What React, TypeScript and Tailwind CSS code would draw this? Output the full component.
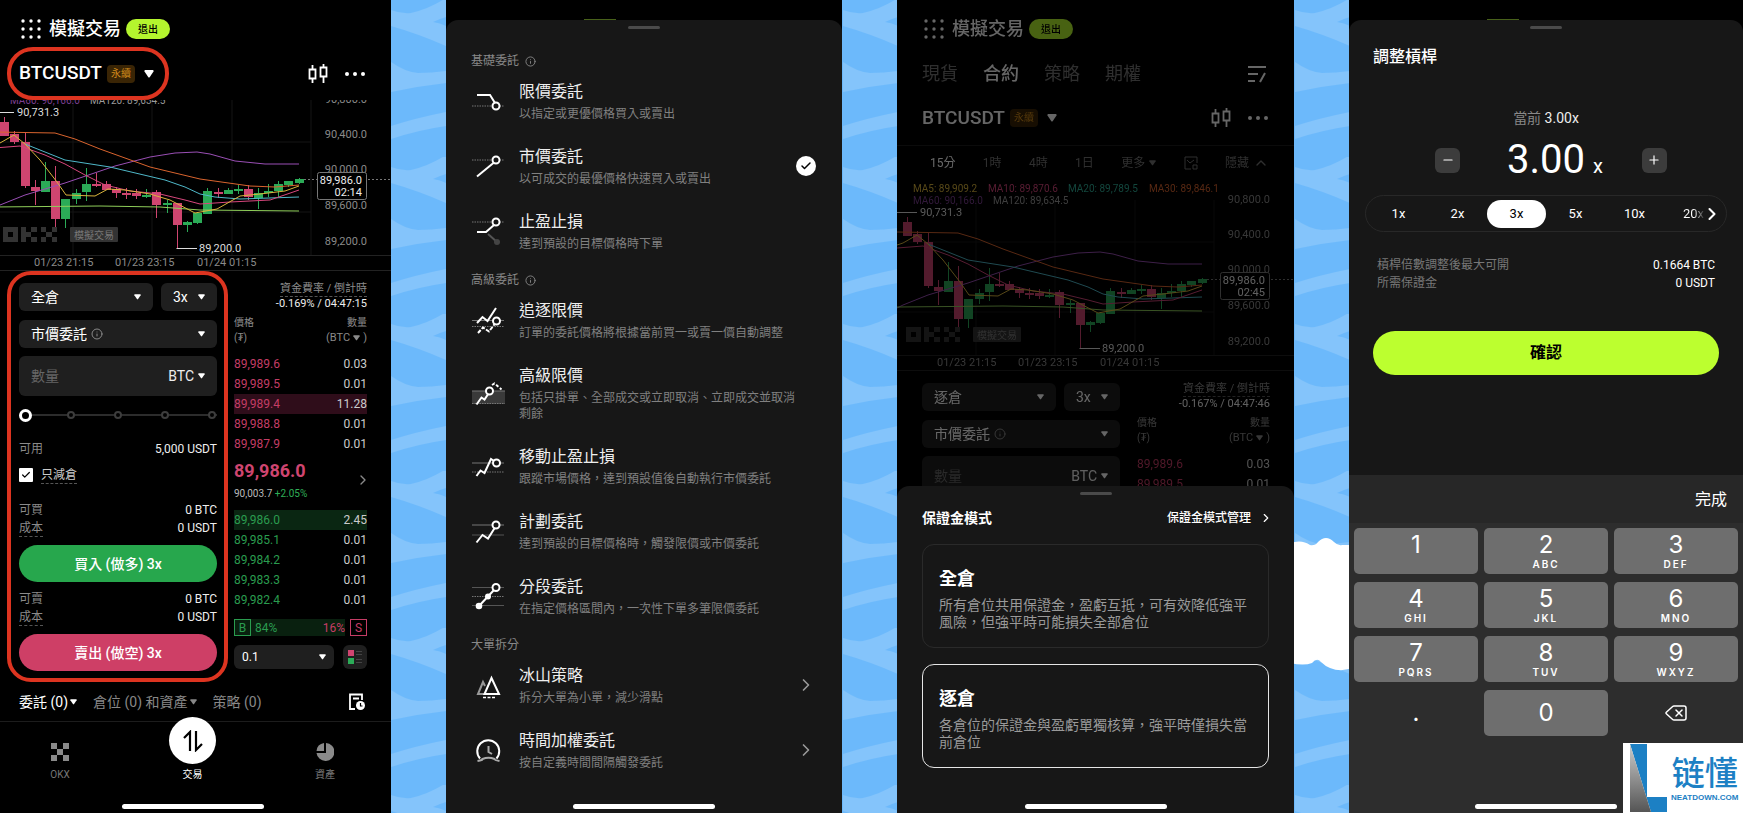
import type { ReactNode } from "react"
import { Check, ChevronRight, ChevronUp, Delete, Info, Minus, Plus } from "lucide-react"

type Row = [string, string, boolean?]

const ASKS: Row[] = [
  ["89,989.6", "0.03"],
  ["89,989.5", "0.01"],
  ["89,989.4", "11.28", true],
  ["89,988.8", "0.01"],
  ["89,987.9", "0.01"],
]

const BIDS: Row[] = [
  ["89,986.0", "2.45", true],
  ["89,985.1", "0.01"],
  ["89,984.2", "0.01"],
  ["89,983.3", "0.01"],
  ["89,982.4", "0.01"],
]

// x, body top, body bottom, wick top, wick bottom, rising
const CANDLES: [number, number, number, number, number, boolean][] = [
  [4, 122, 136, 117, 136, false],
  [14, 134, 142, 131, 144, false],
  [25, 142, 186, 133, 188, false],
  [35, 187, 191, 180, 205, false],
  [45, 181, 192, 162, 192, true],
  [55, 181, 219, 166, 227, false],
  [65, 199, 219, 199, 228, true],
  [76, 193, 199, 189, 204, true],
  [86, 184, 192, 168, 201, true],
  [96, 184, 186, 173, 187, false],
  [106, 184, 190, 181, 190, false],
  [116, 189, 193, 187, 198, false],
  [126, 193, 195, 188, 199, false],
  [136, 193, 196, 189, 199, false],
  [146, 195, 197, 189, 198, true],
  [156, 192, 205, 190, 218, false],
  [167, 203, 205, 200, 213, true],
  [177, 203, 225, 203, 248, false],
  [187, 222, 225, 221, 232, true],
  [197, 213, 223, 212, 224, true],
  [207, 191, 214, 188, 214, true],
  [218, 192, 194, 188, 198, false],
  [228, 190, 194, 188, 194, true],
  [238, 189, 191, 185, 194, true],
  [248, 189, 197, 185, 200, false],
  [258, 193, 198, 188, 209, true],
  [268, 191, 193, 184, 197, true],
  [278, 184, 191, 181, 197, true],
  [288, 181, 185, 181, 187, true],
  [299, 179, 183, 178, 184, true],
]

const AVERAGES: [string, string][] = [
  ["#9a4fb5", "-6,208 0,205 25,195 65,183 115,166 150,157 175,153 197,152 210,154 235,161 265,164 299,164"],
  ["#8fce5a", "-6,207 100,206 160,207 200,210 299,211"],
  ["#d9642e", "-6,132 55,133 75,139 100,149 125,158 150,167 200,179 250,186 275,187 299,185"],
  ["#4fb8c9", "25,144 45,152 65,160 110,167 165,180 185,187 200,194 215,197 240,199 299,197"],
  ["#d8477d", "-6,148 20,146 45,155 65,164 85,175 105,185 130,191 160,194 185,200 200,204 230,202 270,200 299,190"],
  ["#d9b43c", "-6,145 0,143 14,135 25,144 40,160 57,182 66,195 95,196 108,189 125,190 150,194 170,200 195,213 217,209 240,196 260,194 285,191 299,186"],
]

const ICONS: Record<string, ReactNode> = {
  limit: (
    <>
      <path d="M1 22h32" stroke="#777" strokeWidth="1" strokeDasharray="1.5 1" />
      <path d="M6 11h13l5 8" />
      <circle cx="25" cy="22" r="3.5" fill="#171717" />
    </>
  ),
  market: (
    <>
      <path d="M1 11h32" stroke="#777" strokeWidth="1" strokeDasharray="1.5 1" />
      <path d="M6 27.500l17-14" />
      <circle cx="25" cy="11" r="3.500" fill="#171717" />
    </>
  ),
  stop: (
    <>
      <path d="M1 8h32" stroke="#777" strokeWidth="1" strokeDasharray="1.5 1" />
      <path d="M17 20l9 8" stroke="#555" />
      <circle cx="26" cy="28" r="3" fill="#444" stroke="none" />
      <path d="M6 18h9l8-7" />
      <circle cx="25" cy="8" r="3.5" fill="#171717" />
    </>
  ),
  chase: (
    <>
      <path d="M1 17.500h32" stroke="#777" strokeWidth="1" />
      <path d="M1 23.500h32" stroke="#777" strokeWidth="1" strokeDasharray="1.5 1" />
      <path d="M6 20l5.500-6 5 4 8.500-13" />
      <path d="M7 30l5-5.500 6 4 6-8" strokeDasharray="4 1.500" />
      <circle cx="25.5" cy="18" r="3.5" fill="#171717" />
    </>
  ),
  advanced: (
    <>
      <rect x="1" y="15" width="33" height="13" fill="#3a3a3a" stroke="none" />
      <path d="M1 15h33" stroke="#777" strokeWidth="1" />
      <path d="M1 27.5h33" stroke="#777" strokeWidth="1" strokeDasharray="1.5 1" />
      <path d="M5.5 28.500l5-7 3 2 4-6" />
      <path d="M21 9l2.500-1.500 7 6" strokeDasharray="3 2" />
      <circle cx="18.5" cy="15" r="3.5" fill="#171717" />
    </>
  ),
  trailing: (
    <>
      <path d="M1 14h32" stroke="#777" strokeWidth="1" />
      <path d="M1 23h32" stroke="#777" strokeWidth="1" strokeDasharray="1.5 1" />
      <path d="M5.500 27l4-5.500 4 2.500 6.500-14 3 2" />
      <circle cx="25.5" cy="14" r="3.5" fill="#171717" />
    </>
  ),
  trigger: (
    <>
      <path d="M1 11h32" stroke="#777" strokeWidth="1" />
      <path d="M1 21h32" stroke="#555" strokeWidth="1" />
      <path d="M5.500 28.500l6-7.500 5.500 3.500 7-11" />
      <circle cx="25" cy="11" r="3.5" fill="#171717" />
    </>
  ),
  scaled: (
    <>
      <path d="M1 8.500h32M1 26.500h32" stroke="#555" strokeWidth="1" />
      <path d="M1 17.5h32" stroke="#777" strokeWidth="1" strokeDasharray="1.5 1" />
      <path d="M8 27L23 11" />
      <circle cx="8" cy="27" r="3.300" fill="#fff" stroke="none" />
      <circle cx="17" cy="17.500" r="3" fill="#fff" stroke="none" />
      <circle cx="25" cy="8.500" r="3.5" fill="#171717" />
    </>
  ),
  iceberg: (
    <>
      <path d="M13 26H7l5-12 2 4" stroke="#999" />
      <path d="M20.500 10l7.500 16H13.500z" />
      <path d="M12 29.500h12" strokeDasharray="3 1.500" strokeWidth="1.500" />
    </>
  ),
  twap: (
    <>
      <path d="M9 25.500a11 11 0 1 1 16.500 0" />
      <path d="M6.500 28q5.500-1 5-2 6-2.500 12 0 0 1 5 2" stroke="#aaa" />
      <path d="M17.500 13v6l3.500 2" stroke="#aaa" />
    </>
  ),
}

const ORDER_TYPES = [
  {
    group: "基礎委託",
    info: true,
    items: [
      { icon: "limit", title: "限價委託", text: "以指定或更優價格買入或賣出" },
      { icon: "market", title: "市價委託", text: "以可成交的最優價格快速買入或賣出", selected: true },
      { icon: "stop", title: "止盈止損", text: "達到預設的目標價格時下單" },
    ],
  },
  {
    group: "高級委託",
    info: true,
    items: [
      { icon: "chase", title: "追逐限價", text: "訂單的委託價格將根據當前買一或賣一價自動調整" },
      { icon: "advanced", title: "高級限價", text: "包括只掛單、全部成交或立即取消、立即成交並取消剩餘" },
      { icon: "trailing", title: "移動止盈止損", text: "跟蹤市場價格，達到預設值後自動執行市價委託" },
      { icon: "trigger", title: "計劃委託", text: "達到預設的目標價格時，觸發限價或市價委託" },
      { icon: "scaled", title: "分段委託", text: "在指定價格區間內，一次性下單多筆限價委託" },
    ],
  },
  {
    group: "大單拆分",
    items: [
      { icon: "iceberg", title: "冰山策略", text: "拆分大單為小單，減少滑點", more: true },
      { icon: "twap", title: "時間加權委託", text: "按自定義時間間隔觸發委託", more: true },
    ],
  },
] as {
  group: string
  info?: boolean
  items: { icon: string; title: string; text: string; selected?: boolean; more?: boolean }[]
}[]

const KEYS = [
  ["1", ""],
  ["2", "ABC"],
  ["3", "DEF"],
  ["4", "GHI"],
  ["5", "JKL"],
  ["6", "MNO"],
  ["7", "PQRS"],
  ["8", "TUV"],
  ["9", "WXYZ"],
]

const Caret = ({ big }: { big?: boolean }) => (
  <svg viewBox="0 0 10 8" className={`pointer-events-none shrink-0 ${big ? "h-2 w-[10px]" : "h-[6px] w-[7px]"}`} fill="currentColor" aria-hidden="true">
    <path d="M1 0h8q1 .5.500 1.500L5.800 7q-.8 1-1.600 0L.5 1.500Q0 .5 1 0z" />
  </svg>
)

const HomeBar = () => (
  <div className="mt-auto flex justify-center pb-1">
    <div className="h-[5px] w-[142px] rounded-full bg-white" />
  </div>
)

const Handle = () => <div className="mx-auto mt-[6px] h-[3px] w-8 rounded-full bg-[#4a4a4a]" />

const Dropdown = ({ label, value, className, info }: { label: string; value: string; className: string; info?: boolean }) => (
  <div className={`flex items-center rounded-md bg-[#1f1f1f] ${className}`}>
    <select aria-label={label} className="field-sizing-content appearance-none bg-transparent text-white outline-none">
      <option>{value}</option>
    </select>
    {info && <Info className="ml-1 size-3 text-[#8a8a8a]" />}
    <span className="ml-auto">
      <Caret />
    </span>
  </div>
)

const Chart = ({ wide, countdown }: { wide?: boolean; countdown: string }) => (
  <svg
    viewBox={wide ? "-6 79 397 192" : "0 100 391 171"}
    className="block h-auto w-full"
    fontSize="11"
    role="img"
    aria-label="BTCUSDT"
  >
    <path d="M73 100V255M152 100V255M232 100V255M311 100V255M-6 142H311M-6 212H311" stroke="#151515" />
    <g fontSize="10">
      {wide && (
        <>
          <text x="10" y="92" fill="#d9b43c">MA5: 89,909.2</text>
          <text x="85" y="92" fill="#d8477d">MA10: 89,870.6</text>
          <text x="165" y="92" fill="#2fae97">MA20: 89,789.5</text>
          <text x="246" y="92" fill="#d9642e">MA30: 89,846.1</text>
        </>
      )}
      <text x="10" y="104" fill="#7b3f91">MA60: 90,166.0</text>
      <text x="90" y="104" fill="#9a9a9a">MA120: 89,634.5</text>
    </g>
    <g fill="#8a8a8a" textAnchor="end">
      <text x="367" y="103">90,800.0</text>
      <text x="367" y="138">90,400.0</text>
      <text x="367" y="173">90,000.0</text>
      <text x="367" y="209">89,600.0</text>
      <text x="367" y="245">89,200.0</text>
    </g>
    <g fill="#333">
      <path fillRule="evenodd" d="M3 227h15v15H3zM8 232h5v5H8z" />
      <path d="M21 227h5v15h-5zM26 232h5v5h-5zM31 227h6v5h-6zM31 237h6v5h-6z" />
      <path d="M41 227h5v5h-5zM52 227h5v5h-5zM46 232h6v5h-6zM41 237h5v5h-5zM52 237h5v5h-5z" />
      <rect x="70" y="227" width="48" height="15" rx="1" />
    </g>
    <text x="94" y="239" textAnchor="middle" fill="#777" fontSize="10">模擬交易</text>
    {CANDLES.map(([x, top, bottom, high, low, up]) => (
      <g key={x} fill={up ? "#2bab57" : "#cf4570"}>
        <rect x={x} y={high} width="1" height={low - high} />
        <rect x={x - 4} y={top} width="9" height={bottom - top} />
      </g>
    ))}
    {AVERAGES.map(([color, points]) => (
      <polyline key={color} points={points} fill="none" stroke={color} strokeWidth="1" strokeLinejoin="round" />
    ))}
    <path d="M-6 112.500H14M176.500 248.500H197" stroke="#ddd" />
    <text x="17" y="116" fill="#ddd">90,731.3</text>
    <text x="199" y="252" fill="#ddd">89,200.0</text>
    <path d="M304 179.5H391" stroke="#777" strokeDasharray="2 2" />
    <rect x="317.500" y="172.500" width="49" height="27" rx="2" fill="#000" stroke="#777" />
    <g fill="#eee" textAnchor="end">
      <text x="362" y="184">89,986.0</text>
      <text x="362" y="196">{countdown}</text>
    </g>
    <path d="M-6 255.500H391M-6 270.500H391" stroke="#222" />
    <g fill="#8a8a8a">
      <text x="34" y="266">01/23 21:15</text>
      <text x="115" y="266">01/23 23:15</text>
      <text x="197" y="266">01/24 01:15</text>
    </g>
  </svg>
)

const Book = ({ rows, side }: { rows: Row[]; side: "ask" | "bid" }) => (
  <table className="w-full border-collapse text-xs">
    <tbody>
      {rows.map(([price, size, hit]) => (
        <tr key={price} className={`h-5 ${hit ? (side === "ask" ? "bg-[#2f0d1a]" : "bg-[#0a2612]") : ""}`}>
          <td className={side === "ask" ? "text-[#c53d66]" : "text-[#2a9c4f]"}>{price}</td>
          <td className="text-right text-[#ccc]">{size}</td>
        </tr>
      ))}
    </tbody>
  </table>
)

const Pair = ({ label, value, dashed }: { label: string; value: string; dashed?: boolean }) => (
  <div className="flex h-[18px] items-center justify-between text-xs">
    <span className={`leading-4 text-[#8a8a8a] ${dashed ? "border-b border-dashed border-[#555]" : ""}`}>{label}</span>
    <span className="text-[#eee]">{value}</span>
  </div>
)

const OrderForm = ({ mode, short }: { mode: string; short?: boolean }) => (
  <form className={`rounded-3xl border-4 pt-2 pr-[7px] pb-[7px] pl-2 ${short ? "border-transparent" : "border-[#dd3420]"}`}>
    <div className="flex gap-2 text-sm">
      <Dropdown label="保證金模式" value={mode} className="h-7 flex-1 px-3" />
      <Dropdown label="槓桿" value="3x" className="h-7 w-14 px-3" />
    </div>
    <Dropdown label="委託類型" value="市價委託" className="mt-[9px] h-7 px-3 text-sm" info />
    <div className="mt-2 flex h-10 items-center rounded-md bg-[#1f1f1f] px-3 text-sm">
      <input aria-label="數量" placeholder="數量" className="w-24 min-w-0 flex-1 bg-transparent outline-none placeholder:text-[#666]" />
      <select aria-label="單位" className="mr-1 field-sizing-content appearance-none bg-transparent text-[#eee] outline-none">
        <option>BTC</option>
      </select>
      <Caret />
    </div>
    {!short && (
      <>
        <div className="relative mt-[11px] h-4">
          <div className="absolute inset-x-0 top-[7px] flex h-[2px] items-center justify-between bg-[#2c2c2c] px-px">
            {[0, 1, 2, 3, 4].map((n) => (
              <span key={n} className="size-2 rounded-full border-2 border-[#3d3d3d] bg-black" />
            ))}
          </div>
          <input
            type="range"
            aria-label="倉位比例"
            defaultValue={0}
            className="absolute inset-0 m-0 h-4 w-full appearance-none bg-transparent [&::-webkit-slider-thumb]:size-[13px] [&::-webkit-slider-thumb]:appearance-none [&::-webkit-slider-thumb]:rounded-full [&::-webkit-slider-thumb]:border-[3px] [&::-webkit-slider-thumb]:border-white [&::-webkit-slider-thumb]:bg-black"
          />
        </div>
        <div className="mt-[17px]">
          <Pair label="可用" value="5,000 USDT" />
        </div>
        <label className="relative mt-2 flex h-[18px] items-center gap-2 text-xs text-[#ccc]">
          <input type="checkbox" defaultChecked className="size-[14px] appearance-none rounded-[1px] bg-white" />
          <Check className="pointer-events-none absolute left-[2px] size-[10px] text-black" strokeWidth={3} />
          <span className="border-b border-dashed border-[#555] leading-4">只減倉</span>
        </label>
        <div className="mt-[17px]">
          <Pair label="可買" value="0 BTC" />
          <Pair label="成本" value="0 USDT" dashed />
        </div>
        <button type="button" className="mt-2 block h-[37px] w-full rounded-full bg-[#27a74d] text-sm font-medium">
          買入 (做多) 3x
        </button>
        <div className="mt-2">
          <Pair label="可賣" value="0 BTC" />
          <Pair label="成本" value="0 USDT" dashed />
        </div>
        <button type="button" className="mt-2 block h-[37px] w-full rounded-full bg-[#ce3f66] text-sm font-medium">
          賣出 (做空) 3x
        </button>
      </>
    )}
  </form>
)

const OrderBook = ({ funding, short }: { funding: string; short?: boolean }) => (
  <div className="pt-[11px] text-[#8a8a8a]">
    <div className="flex flex-col items-end text-[11px] leading-[14px]">
      <span className="border-b border-dashed border-[#555]">資金費率 / 倒計時</span>
      <span className="whitespace-nowrap text-[#eee]">{funding}</span>
    </div>
    <div className="mt-1 flex justify-between text-[10px] leading-[15px]">
      <div>
        價格
        <br />
        (₮)
      </div>
      <div className="text-right">
        數量
        <div className="flex items-center gap-[3px] text-[11px]">
          (BTC <Caret /> )
        </div>
      </div>
    </div>
    <div className="mt-[9px]">
      <Book rows={short ? ASKS.slice(0, 2) : ASKS} side="ask" />
    </div>
    {!short && (
      <>
        <div className="mt-[5px] flex items-center justify-between">
          <div>
            <div className="text-lg leading-6 font-bold text-[#cf4570]">89,986.0</div>
            <div className="mt-1 text-[10px] leading-[14px] text-[#bbb]">
              90,003.7 <span className="text-[#2fae57]">+2.05%</span>
            </div>
          </div>
          <ChevronRight className="-mr-1 size-4" />
        </div>
        <div className="mt-[9px]">
          <Book rows={BIDS} side="bid" />
        </div>
        <div className="mt-[9px] flex h-[17px] items-center justify-between text-xs">
          <div className="flex h-full w-[111px] items-center justify-between bg-[#09200f]">
            <span className="flex items-center gap-1 text-[#2a9c4f]">
              <span className="flex size-[17px] items-center justify-center border border-[#2a9c4f]">B</span>84%
            </span>
            <span className="text-[#c53d66]">16%</span>
          </div>
          <span className="flex size-[17px] items-center justify-center border border-[#c53d66] text-[#c53d66]">S</span>
        </div>
        <div className="mt-[9px] flex items-center justify-between text-xs text-white">
          <Dropdown label="深度" value="0.1" className="h-6 w-[100px] px-2" />
          <button type="button" aria-label="訂單簿樣式" className="flex size-6 items-center justify-center rounded-md bg-[#1f1f1f]">
            <svg viewBox="0 0 16 16" className="size-4">
              <path d="M1 1h6v6H1z" fill="#cf4570" />
              <path d="M1 9h6v6H1z" fill="#2bab57" />
              <path d="M9 2h6v1H9zM9 5h6v1H9zM9 10h6v1H9zM9 13h6v1H9z" fill="#444" />
            </svg>
          </button>
        </div>
      </>
    )}
  </div>
)

const TradeScreen = ({ full, mode, funding, countdown }: { full?: boolean; mode: string; funding: string; countdown: string }) => {
  const pad = full ? "pl-[25px] pr-[25px]" : "pl-[19px] pr-[25px]"
  const outdent = full ? "pl-[13px] pr-6" : "pl-[7px] pr-6"
  return (
    <div className={`flex flex-col ${full ? "" : "min-h-screen"}`}>
      <header className={`flex h-[41px] items-center pt-[17px] ${pad}`}>
        <button type="button" aria-label="選單" className="ml-[2px]">
          <svg viewBox="0 0 20 20" className="size-5" fill="currentColor">
            {[2, 10, 18].map((y) => [2, 10, 18].map((x) => <circle key={`${x}-${y}`} cx={x} cy={y} r="1.700" />))}
          </svg>
        </button>
        <h1 className="ml-2 text-lg font-medium">模擬交易</h1>
        <button type="button" className="ml-[5px] h-5 w-11 rounded-full bg-[#b4f52e] text-[10px] font-medium text-black">
          退出
        </button>
      </header>

      {full && (
        <nav className={`mt-[6px] flex h-[53px] items-center gap-[25px] text-lg text-[#777] ${pad}`}>
          <a href="#spot">現貨</a>
          <a href="#futures" className="font-medium text-white">合約</a>
          <a href="#strategy">策略</a>
          <a href="#options">期權</a>
          <svg viewBox="0 0 20 18" className="mr-[2px] ml-auto h-[18px] w-5" fill="none" stroke="#fff" strokeWidth="2">
            <path d="M1 2h18M1 9h10M1 16h7M13 17l5-9" />
          </svg>
        </nav>
      )}

      <div className={`flex items-center ${full ? "h-9" : "mt-[6px]"} ${outdent}`}>
        <button
          type="button"
          className={`flex items-center rounded-[26px] border-4 pr-[11px] pl-2 ${full ? "h-9 border-transparent" : "h-[53px] border-[#dd3420]"}`}
        >
          <span className="text-[19px] font-medium">BTCUSDT</span>
          <span className="mr-[9px] ml-[5px] rounded-sm bg-[#3a2505] px-1 text-[10px] leading-[18px] text-[#d08a1c]">永續</span>
          <Caret big />
        </button>
        <svg viewBox="0 0 20 20" className="ml-auto size-5" fill="none" stroke="#fff" strokeWidth="1.800">
          <path d="M4.500 1v4M4.500 15v4M15.500 0v3M15.500 13v6M1.500 5.500h6v9h-6zM12.500 3.500h6v9h-6z" />
        </svg>
        <button type="button" aria-label="更多" className="mr-px ml-4">
          <svg viewBox="0 0 22 6" className="h-[6px] w-[22px]" fill="currentColor">
            <circle cx="3" cy="3" r="2" />
            <circle cx="11" cy="3" r="2" />
            <circle cx="19" cy="3" r="2" />
          </svg>
        </button>
      </div>

      {full && (
        <div className="mt-[9px] flex h-[34px] items-center justify-between border-t border-[#1c1c1c] pr-[25px] pl-[33px] text-xs text-[#777]">
          <button type="button" className="text-white">15分</button>
          <button type="button">1時</button>
          <button type="button">4時</button>
          <button type="button">1日</button>
          <button type="button" className="flex items-center gap-1">更多 <Caret /></button>
          <svg viewBox="0 0 14 14" className="size-[14px]" fill="none" stroke="currentColor">
            <path d="M13 7V1H1v12h6M3 4l3 3 4-3M9 9h4v4H9z" />
          </svg>
          <button type="button" className="flex items-center gap-1">隱藏 <ChevronUp className="size-4" /></button>
        </div>
      )}

      <div className="overflow-hidden">
        <Chart wide={full} countdown={countdown} />
      </div>

      <div className={`grid grid-cols-[221fr_133fr] gap-x-[6px] ${outdent}`}>
        <OrderForm mode={mode} short={full} />
        <OrderBook funding={funding} short={full} />
      </div>

      {!full && (
        <>
          <div className={`mt-2 flex h-6 items-center gap-4 text-sm text-[#888] ${pad}`}>
            <button type="button" className="flex items-center gap-[2px] text-white">委託 (0)<Caret /></button>
            <button type="button" className="flex items-center gap-[2px]">倉位 (0) 和資產<Caret /></button>
            <button type="button">策略 (0)</button>
            <svg viewBox="0 0 18 18" className="ml-auto size-[18px]" fill="none" stroke="#fff" strokeWidth="1.800">
              <path d="M7 16H2V1.500h12V7M5 5.500h6" />
              <circle cx="12.500" cy="12.500" r="4.500" fill="#fff" stroke="none" />
              <path d="M12.500 10v3h2" stroke="#000" strokeWidth="1.200" />
            </svg>
          </div>

          <nav className="mt-[7px] flex justify-between border-t border-[#1c1c1c] pr-[46px] pl-10 text-[10px] leading-[14px] text-[#777]">
            <a href="#okx" className="mt-5 flex w-10 flex-col items-center gap-[6px]">
              <svg viewBox="0 0 18 18" className="h-5 w-[18px]" fill="#8a8a8a">
                <path d="M0 0h6v6H0zM12 0h6v6h-6zM6 6h6v6H6zM0 12h6v6H0zM12 12h6v6h-6z" />
              </svg>
              OKX
            </a>
            <a href="#trade" className="relative -mt-[5px] flex w-12 flex-col items-center gap-1 text-white">
              <span className="flex size-[47px] items-center justify-center rounded-full bg-white">
                <svg viewBox="0 0 22 22" className="size-[22px]" fill="none" stroke="#000" strokeWidth="2.200">
                  <path d="M2 8l6-6v19M14 1v19l6-6" />
                </svg>
              </span>
              交易
            </a>
            <a href="#assets" className="mt-5 flex w-10 flex-col items-center gap-[6px]">
              <svg viewBox="0 0 18 18" className="h-5 w-[18px]" fill="#8a8a8a">
                <path d="M10 0a9 9 0 1 1-9.500 10H10z" />
                <path d="M8 0v8H.5A9 9 0 0 1 8 0z" />
              </svg>
              資產
            </a>
          </nav>
          <div className="mt-auto pr-[6px]">
            <HomeBar />
          </div>
        </>
      )}
    </div>
  )
}

const OrderTypeSheet = () => (
  <div className="flex flex-1 flex-col rounded-t-xl bg-[#171717]">
    <Handle />
    <div className="pr-[26px] pl-[25px]">
      {ORDER_TYPES.map(({ group, info, items }, i) => (
        <section key={group} className={i === 0 ? "mt-6" : "mt-5"}>
          <h2 className="flex items-center gap-[6px] text-xs leading-4 text-[#888]">
            {group}
            {info && <Info className="size-[11px]" />}
          </h2>
          <div className="mt-[11px] flex flex-col gap-[23px]">
            {items.map((item) => (
              <button key={item.title} type="button" className="flex w-full items-center text-left">
                <svg viewBox="0 0 34 34" className="size-[34px] shrink-0" fill="none" stroke="#fff" strokeWidth="2">
                  {ICONS[item.icon]}
                </svg>
                <span className="ml-[14px] min-w-0 flex-1">
                  <span className="block text-base leading-6 text-[#eee]">{item.title}</span>
                  <span className="mt-[2px] block text-xs leading-4 text-[#808080]">{item.text}</span>
                </span>
                <span className="flex w-5 shrink-0 justify-center">
                  {item.selected && (
                    <span className="flex size-5 items-center justify-center rounded-full bg-white text-black">
                      <Check className="size-3" strokeWidth={3} />
                    </span>
                  )}
                  {item.more && <ChevronRight className="size-5 text-[#999]" />}
                </span>
              </button>
            ))}
          </div>
        </section>
      ))}
    </div>
    <HomeBar />
  </div>
)

const MarginCard = ({ title, text, active }: { title: string; text: string; active?: boolean }) => (
  <button
    type="button"
    aria-pressed={!!active}
    className={`mt-4 block w-full rounded-xl border px-4 pt-[22px] pb-4 text-left ${active ? "border-[#e5e5e5]" : "border-[#2a2a2a]"}`}
  >
    <span className="block text-lg leading-6 font-bold">{title}</span>
    <span className="mt-[6px] block text-sm leading-[17px] text-[#999]">{text}</span>
  </button>
)

const MarginSheet = () => (
  <div className="relative mt-auto flex flex-col rounded-t-xl bg-[#171717]">
    <Handle />
    <div className="px-[25px] pb-9">
      <div className="mt-3 flex h-[21px] items-center justify-between">
        <h2 className="text-sm font-bold">保證金模式</h2>
        <a href="#manage" className="flex items-center gap-2 text-xs font-medium">
          保證金模式管理 <ChevronRight className="-mr-1 size-[14px]" />
        </a>
      </div>
      <MarginCard title="全倉" text="所有倉位共用保證金，盈虧互抵，可有效降低強平風險，但強平時可能損失全部倉位" />
      <MarginCard title="逐倉" text="各倉位的保證金與盈虧單獨核算，強平時僅損失當前倉位" active />
    </div>
    <HomeBar />
  </div>
)

const LeverageSheet = () => (
  <div className="flex flex-1 flex-col rounded-t-xl bg-[#171717]">
    <Handle />
    <div className="px-6">
      <h2 className="mt-4 text-base leading-6 font-medium">調整槓桿</h2>
      <p className="mt-[39px] text-center text-sm leading-5 text-[#888]">
        當前 <span className="text-[#eee]">3.00x</span>
      </p>
      <div className="mt-2 flex h-12 items-center justify-between pr-[52px] pl-[62px]">
        <button type="button" aria-label="減少" className="flex size-[25px] items-center justify-center rounded-md bg-[#3c3c3c]">
          <Minus className="size-[14px]" />
        </button>
        <label className="ml-2 flex items-baseline gap-1 text-xl">
          <input aria-label="槓桿倍數" defaultValue="3.00" className="w-[82px] bg-transparent text-[40px] leading-[48px] outline-none" />x
        </label>
        <button type="button" aria-label="增加" className="flex size-[25px] items-center justify-center rounded-md bg-[#3c3c3c]">
          <Plus className="size-[14px]" />
        </button>
      </div>
    </div>
    <div className="mx-4 mt-[11px] flex h-[37px] items-center rounded-full border border-[#282828] pr-1 pl-[3px] text-[13px]">
      <div className="flex min-w-0 flex-1 items-center overflow-hidden">
        {["1x", "2x", "3x", "5x", "10x", "20x"].map((x) => (
          <label
            key={x}
            className="flex h-7 w-[59px] shrink-0 items-center justify-center rounded-full has-checked:bg-white has-checked:text-black last:bg-linear-to-r last:from-white last:from-50% last:to-transparent last:to-70% last:bg-clip-text last:text-transparent"
          >
            <input type="radio" name="leverage" value={x} defaultChecked={x === "3x"} className="sr-only" />
            {x}
          </label>
        ))}
      </div>
      <ChevronRight className="-ml-2 size-5 shrink-0" strokeWidth={2.500} />
    </div>
    <dl className="mx-7 mt-6 grid grid-cols-[1fr_auto] text-xs leading-[18px]">
      <dt className="text-[#777]">槓桿倍數調整後最大可開</dt>
      <dd className="text-right">0.1664 BTC</dd>
      <dt className="text-[#777]">所需保證金</dt>
      <dd className="text-right">0 USDT</dd>
    </dl>
    <button type="button" className="mx-6 mt-[39px] mb-[100px] h-11 rounded-full bg-[#bcff2f] text-base font-bold text-black">
      確認
    </button>
    <div className="flex flex-1 flex-col bg-[#2d2d2d] font-[Inter,'Noto_Sans_CJK_TC',sans-serif]">
      <div className="flex h-12 items-center justify-end bg-[#272727] pr-4">
        <button type="button" className="text-base">完成</button>
      </div>
      <div className="mt-[5px] grid grid-cols-3 gap-x-[6px] gap-y-2 px-[5px]">
        {KEYS.map(([digit, letters]) => (
          <button key={digit} type="button" className="flex h-[46px] flex-col items-center rounded-[5px] bg-[#6e6e6e] pt-[3px]">
            <span className="text-2xl leading-[27px]">{digit}</span>
            <span className="text-[10px] leading-3 font-semibold tracking-[2px]">{letters}</span>
          </button>
        ))}
        <button type="button" className="h-[46px] text-2xl">.</button>
        <button type="button" className="h-[46px] rounded-[5px] bg-[#6e6e6e] text-2xl">0</button>
        <button type="button" aria-label="刪除" className="flex h-[46px] items-center justify-center">
          <Delete className="size-6" strokeWidth={1.500} />
        </button>
      </div>
      <HomeBar />
    </div>
  </div>
)

const Waves = () => (
  <svg className="absolute inset-0 h-full w-full" aria-hidden="true">
    <defs>
      <pattern id="waves" x="391" y="0" width="452" height="157" patternUnits="userSpaceOnUse">
        <g fill="#84c4fb">
          <path d="M0 10q10 4 20 3Q38 9 55-2v19q-7 2-13 5 7 1 13 4v20Q28 34 0 26z" />
          <path d="M0 62q14 10 27 11 14 0 28-2v12Q28 86 0 92z" />
          <path d="M0 126q25-8 55-14v14q-28 4-55 13z" />
        </g>
      </pattern>
    </defs>
    <rect width="100%" height="100%" fill="#6cb9fb" />
    <rect width="100%" height="100%" fill="url(#waves)" />
    <path
      d="M1290 543q12-4 20 2 5 1 8-3 8-8 16 0 4 4 8 3h12v122q-12 6-24 1-5-2-9-6-4-5-9 1-8 3-22 0z"
      fill="#fff"
    />
  </svg>
)

const Watermark = () => (
  <div className="absolute right-0 bottom-0 flex h-[70px] w-[120px] items-center bg-white pl-[7px] text-[#1c80c4]">
    <svg viewBox="0 0 37 68" className="h-[68px] w-[37px] shrink-0">
      <defs>
        <linearGradient id="fold" x1="0" y1="0" x2="0" y2="1">
          <stop offset="0" stopColor="#ccc" />
          <stop offset="1" stopColor="#555" />
        </linearGradient>
      </defs>
      <path d="M0 0h17v53h20v15H21z" fill="#1c80c4" />
      <path d="M0 0l21 68H0z" fill="url(#fold)" />
    </svg>
    <div className="ml-1 font-['Noto_Sans_CJK_SC',sans-serif] whitespace-nowrap" lang="zh-Hans">
      <div className="text-center text-[33px] leading-9 font-medium">链懂</div>
      <div className="mt-1 text-center font-['Liberation_Sans',sans-serif] text-[8px] leading-[10px] font-bold">NEATDOWN.COM</div>
    </div>
  </div>
)

const App = () => {
  return (
    <main
      lang="zh-Hant"
      className="relative grid min-h-screen grid-cols-[391fr_396fr_397fr_394fr] gap-x-[55px] overflow-hidden font-[Roboto,'Noto_Sans_CJK_TC',sans-serif] text-white"
    >
      <Waves />

      <section className="relative min-w-0 bg-black">
        <TradeScreen mode="全倉" funding="-0.169% / 04:47:15" countdown="02:14" />
      </section>

      <section className="relative flex min-w-0 flex-col bg-black">
        <div className="h-5 pt-[19px]">
          <div className="ml-[138px] h-px w-8 bg-[#48611a]" />
        </div>
        <OrderTypeSheet />
      </section>

      <section className="relative flex min-w-0 flex-col bg-black">
        <div className="absolute inset-x-0 top-0 bottom-[315px] overflow-hidden opacity-40" aria-hidden="true">
          <TradeScreen full mode="逐倉" funding="-0.167% / 04:47:46" countdown="02:45" />
        </div>
        <MarginSheet />
      </section>

      <section className="relative flex min-w-0 flex-col bg-black">
        <div className="h-5 pt-[19px]">
          <div className="ml-[138px] h-px w-8 bg-[#48611a]" />
        </div>
        <LeverageSheet />
        <Watermark />
      </section>
    </main>
  )
}

export default App
